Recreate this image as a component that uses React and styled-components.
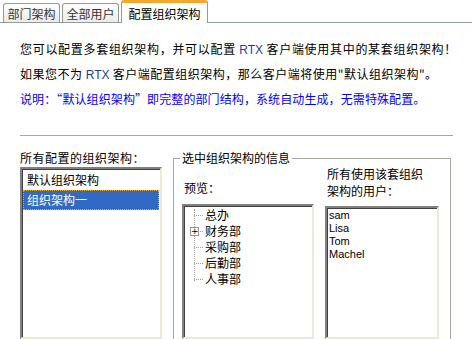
import React from 'react';
import styled, { createGlobalStyle } from 'styled-components';

const Global = createGlobalStyle`
  html, body { margin: 0; padding: 0; background: #fff; }
  body {
    font-family: "Noto Sans CJK SC", "DejaVu Sans", sans-serif;
    font-size: 12px;
    color: #000;
    width: 472px;
    height: 339px;
    overflow: hidden;
  }
`;

const Page = styled.div`
  width: 472px;
  height: 339px;
  display: flex;
  flex-direction: column;
`;

const TabBar = styled.div`
  display: flex;
  align-items: flex-end;
  height: 22px;
  padding-left: 3px;
  border-bottom: 1px solid #919b9c;
  gap: 2px;
`;

const Tab = styled.div`
  height: ${p => (p.active ? '23px' : '19px')};
  width: ${p => p.w};
  justify-content: center;
  display: flex;
  align-items: center;
  font-size: 12px;
  color: ${p => (p.active ? '#000' : '#333')};
  background: ${p => (p.active ? '#fff' : 'linear-gradient(#fefefe, #ecebe6)')};
  border: 1px solid #919b9c;
  border-bottom: none;
  border-top: ${p => (p.active ? '3px solid #f3a72e' : '1px solid #919b9c')};
  border-radius: 3px 3px 0 0;
  margin-bottom: ${p => (p.active ? '-1px' : '0')};
  box-sizing: border-box;
`;

const Body = styled.div`
  flex: 1;
  padding: 13px 20px 0 20px;
  display: flex;
  flex-direction: column;
  min-height: 0;
`;

const Line = styled.div`
  height: 25px;
  line-height: 25px;
  font-size: 12px;
  white-space: nowrap;
  color: ${p => p.color || '#000'};
  letter-spacing: ${p => p.spacing || '0'};
`;

const Latin = styled.span`
  font-family: "Liberation Sans", sans-serif;
  color: #1f3f8f;
  letter-spacing: 0;
`;

const Rule = styled.hr`
  margin: 24px 0 0 0;
  border: none;
  border-top: 1px solid #aca899;
  border-bottom: 1px solid #fff;
  width: 433px;
`;

const Lower = styled.div`
  flex: 1;
  display: flex;
  gap: 11px;
  min-height: 0;
  margin-top: 13px;
`;

const LeftCol = styled.div`
  width: 142px;
  display: flex;
  flex-direction: column;
`;

const Label = styled.div`
  font-size: 12px;
  line-height: ${p => p.lh || '16px'};
  white-space: ${p => (p.wrap ? 'normal' : 'nowrap')};
  padding-left: ${p => p.pl || '0'};
  max-width: ${p => p.maxw || 'none'};
  letter-spacing: ${p => p.spacing || '0'};
`;

const Sunken = styled.div`
  flex: 1;
  background: #fff;
  border-top: 2px solid #808080;
  border-left: 2px solid #808080;
  border-right: 2px solid #ece9d8;
  border-bottom: 2px solid #ece9d8;
  box-shadow: inset 1px 1px 0 #404040;
  box-sizing: border-box;
  margin-top: ${p => p.mt || '0'};
  padding: 1px;
  overflow: hidden;
`;

const ListItem = styled.div`
  height: 20px;
  line-height: 20px;
  padding-left: 4px;
  font-size: 12px;
  white-space: nowrap;
  color: ${p => (p.selected ? '#fff' : '#000')};
  background: ${p => (p.selected ? '#316ac5' : 'transparent')};
  outline: ${p => (p.selected ? '1px dotted #f0a030' : 'none')};
  outline-offset: -1px;
`;

const Group = styled.fieldset`
  margin: 1px 0 0 0;
  width: 278px;
  box-sizing: border-box;
  border: 1px solid #aca899;
  border-bottom: none;
  padding: 0 10px 0 8px;
  display: flex;
  gap: 11px;
  min-height: 0;
`;

const Legend = styled.legend`
  padding: 0 2px;
  margin-left: -2px;
  font-size: 12px;
  line-height: 14px;
`;

const GroupCol = styled.div`
  width: ${p => p.w};
  display: flex;
  flex-direction: column;
  padding-top: ${p => p.pt || '0'};
`;

const TreeList = styled.div`
  position: relative;
  padding: 0;
`;

const TreeRow = styled.div`
  position: relative;
  height: 16px;
  line-height: 16px;
  padding-left: 20px;
  font-size: 12px;
`;

const Branch = styled.span`
  position: absolute;
  left: 9px;
  top: 8px;
  width: 9px;
  border-top: 1px dotted #a0a0a0;
`;

const VLine = styled.span`
  position: absolute;
  left: 9px;
  top: 2px;
  height: 72px;
  border-left: 1px dotted #a0a0a0;
`;

const Plus = styled.span`
  position: absolute;
  left: 5px;
  top: 4px;
  width: 7px;
  height: 7px;
  border: 1px solid #919b9c;
  background: #fff;
  font-family: "DejaVu Sans", sans-serif;
  font-size: 9px;
  line-height: 7px;
  text-align: center;
  color: #000;
  z-index: 1;
`;

const User = styled.div`
  font-family: "Liberation Sans", sans-serif;
  font-size: 11px;
  height: 13px;
  line-height: 13px;
  padding-left: 1px;
  color: #000;
`;

const depts = ['总办', '财务部', '采购部', '后勤部', '人事部'];
const users = ['sam', 'Lisa', 'Tom', 'Machel'];

export default function App() {
  return (
    <Page>
      <Global />
      <TabBar>
        <Tab w="57px">部门架构</Tab>
        <Tab w="57px">全部用户</Tab>
        <Tab active w="87px">配置组织架构</Tab>
      </TabBar>
      <Body>
        <Line spacing="0.7px">您可以配置多套组织架构，并可以配置 <Latin>RTX</Latin> 客户端使用其中的某套组织架构！</Line>
        <Line spacing="0.5px">如果您不为 <Latin>RTX</Latin> 客户端配置组织架构，那么客户端将使用"默认组织架构"。</Line>
        <Line color="#0000ff" spacing="0.1px">说明：“默认组织架构”即完整的部门结构，系统自动生成，无需特殊配置。</Line>
        <Rule />
        <Lower>
          <LeftCol>
            <Label spacing="0.5px">所有配置的组织架构：</Label>
            <Sunken mt="1px">
              <ListItem>默认组织架构</ListItem>
              <ListItem selected>组织架构一</ListItem>
            </Sunken>
          </LeftCol>
          <Group>
            <Legend>选中组织架构的信息</Legend>
            <GroupCol w="132px" pt="15px">
              <Label lh="16px" pl="2px">预览：</Label>
              <Sunken mt="8px">
                <TreeList>
                  <VLine />
                  {depts.map((d, i) => (
                    <TreeRow key={d}>
                      <Branch />
                      {i === 1 && <Plus>+</Plus>}
                      {d}
                    </TreeRow>
                  ))}
                </TreeList>
              </Sunken>
            </GroupCol>
            <GroupCol w="114px" pt="0px">
              <Label wrap lh="17px" pl="2px" maxw="102px">所有使用该套组织架构的用户：</Label>
              <Sunken mt="7px">
                {users.map(u => (
                  <User key={u}>{u}</User>
                ))}
              </Sunken>
            </GroupCol>
          </Group>
        </Lower>
      </Body>
    </Page>
  );
}
